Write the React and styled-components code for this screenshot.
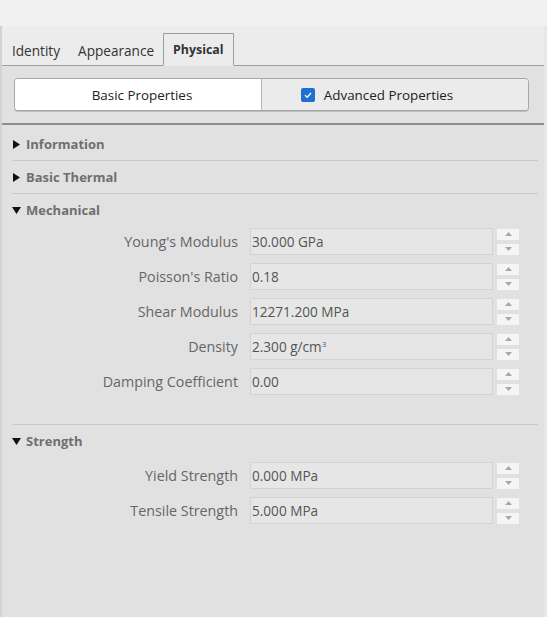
import React from 'react';
import styled, { createGlobalStyle } from 'styled-components';

const GlobalStyle = createGlobalStyle`
  html, body {
    margin: 0;
    padding: 0;
    background: #f0f0f0;
    font-family: "Open Sans", "Noto Sans", sans-serif;
  }
`;

const sections = [
  {
    title: 'Mechanical',
    top: 2,
    rows: [
      { label: "Young's Modulus", value: '30.000 GPa' },
      { label: "Poisson's Ratio", value: '0.18' },
      { label: 'Shear Modulus', value: '12271.200 MPa' },
      { label: 'Density', value: '2.300 g/cm', sup: '3' },
      { label: 'Damping Coefficient', value: '0.00' },
    ],
  },
  {
    title: 'Strength',
    top: 5,
    rows: [
      { label: 'Yield Strength', value: '0.000 MPa' },
      { label: 'Tensile Strength', value: '5.000 MPa' },
    ],
  },
];

const App = () => {
  return (
    <>
      <GlobalStyle />
      <TopStrip />
      <Panel>
        <TabBar>
          <Tab>Identity</Tab>
          <Tab>Appearance</Tab>
          <Tab active>Physical</Tab>
        </TabBar>
        <Segmented>
          <Segment active>Basic Properties</Segment>
          <Segment>
            <CheckBox>
              <svg width="10" height="10" viewBox="0 0 10 10">
                <path d="M2 5.2 L4.2 7.3 L8 3" fill="none" stroke="#fff" strokeWidth="1.3" />
              </svg>
            </CheckBox>
            Advanced Properties
          </Segment>
        </Segmented>
        <Body>
          <Header>
            <Arrow open={false} />
            Information
          </Header>
          <Divider />
          <Header>
            <Arrow open={false} />
            Basic Thermal
          </Header>
          <Divider />
          {sections.map((s, i) => (
            <Section key={s.title} last={i === sections.length - 1}>
              <Header>
                <Arrow open />
                {s.title}
              </Header>
              <Rows top={s.top}>
                {s.rows.map((r) => (
                  <Row key={r.label}>
                    <Label>{r.label}</Label>
                    <Input>
                      {r.value}
                      {r.sup && <sup>{r.sup}</sup>}
                    </Input>
                    <Spinner>
                      <SpinButton>
                        <svg width="7" height="4" viewBox="0 0 7 4"><path d="M0 4 L3.5 0 L7 4 Z" fill="#a8a8a8" /></svg>
                      </SpinButton>
                      <SpinButton>
                        <svg width="7" height="4" viewBox="0 0 7 4"><path d="M0 0 L3.5 4 L7 0 Z" fill="#a8a8a8" /></svg>
                      </SpinButton>
                    </Spinner>
                  </Row>
                ))}
              </Rows>
            </Section>
          ))}
        </Body>
      </Panel>
    </>
  );
};

const Arrow = ({ open }) => (
  <ArrowBox>
    <svg width="9" height="9" viewBox="0 0 9 9">
      {open ? <path d="M0 1 L9 1 L4.5 8 Z" fill="#111" /> : <path d="M1 0 L8 4.5 L1 9 Z" fill="#111" />}
    </svg>
  </ArrowBox>
);

const TopStrip = styled.div`
  height: 26px;
  background: #f1f1f1;
`;

const Panel = styled.div`
  height: 591px;
  background: #e1e1e1;
  border-left: 2px solid #d2d2d2;
  border-right: 3px solid #e8e8e8;
  box-sizing: border-box;
  display: flex;
  flex-direction: column;
`;

const TabBar = styled.div`
  display: flex;
  align-items: flex-end;
  height: 39px;
  padding-left: 1px;
  border-bottom: 1px solid #9e9e9e;
  background: #ececec;
`;

const Tab = styled.div`
  font-size: ${(p) => (p.active ? '12.4px' : '13.6px')};
  color: #333;
  padding: 0 9px;
  height: 30px;
  line-height: 29px;
  box-sizing: border-box;
  font-weight: ${(p) => (p.active ? 700 : 400)};
  margin-bottom: -1px;
  ${(p) =>
    p.active &&
    `
    border: 1px solid #9e9e9e;
    border-bottom: 1px solid #ececec;
    background: #ececec;
    height: 33px;
    line-height: 31px;
  `}
`;

const Segmented = styled.div`
  display: flex;
  margin: 12px 15px 12px 12px;
  height: 31px;
  border: 1px solid #a6a6a6;
  border-radius: 4px;
  overflow: hidden;
  background: #ebebeb;
  box-shadow: 0 1px 0 #bdbdbd;
`;

const Segment = styled.div`
  flex: ${(p) => (p.active ? '0 0 247px' : '1')};
  display: flex;
  align-items: center;
  justify-content: center;
  gap: 9px;
  box-sizing: border-box;
  padding: ${(p) => (p.active ? '0 0 0 8px' : '0 36px 0 0')};
  font-size: 13.4px;
  color: #222;
  background: ${(p) => (p.active ? '#ffffff' : '#ebebeb')};
  border-right: ${(p) => (p.active ? '1px solid #b8b8b8' : 'none')};
`;

const CheckBox = styled.span`
  width: 14px;
  height: 14px;
  border-radius: 2px;
  background: #1f6fd0;
  display: flex;
  align-items: center;
  justify-content: center;
`;

const Body = styled.div`
  flex: 1;
  border-top: 2px solid #8d8d8d;
  padding: 3px 6px 0 10px;
  background: #e1e1e1;
`;

const Header = styled.div`
  display: flex;
  align-items: center;
  height: 32px;
  font-size: 13px;
  font-weight: 700;
  color: #6f6f6f;
`;

const ArrowBox = styled.span`
  width: 14px;
  display: inline-flex;
  align-items: center;
`;

const Divider = styled.div`
  height: 1px;
  background: #c9c9c9;
`;

const Section = styled.div`
  border-bottom: ${(p) => (p.last ? 'none' : '1px solid #c9c9c9')};
  padding-bottom: ${(p) => (p.last ? '0' : '29px')};
`;

const Rows = styled.div`
  display: flex;
  flex-direction: column;
  gap: 8px;
  padding-top: ${(p) => p.top}px;
`;

const Row = styled.div`
  display: grid;
  grid-template-columns: 226px 243px 23px;
  column-gap: 12px;
  align-items: center;
  height: 27px;
`;

const Label = styled.div`
  text-align: right;
  font-size: 14.3px;
  color: #666;
`;

const Input = styled.div`
  height: 27px;
  box-sizing: border-box;
  border: 1px solid #d3d3d3;
  background: #e6e6e6;
  font-size: 13.6px;
  color: #555;
  line-height: 25px;
  padding-left: 1px;
  sup {
    font-size: 8px;
    line-height: 0;
    vertical-align: 5px;
  }
`;

const Spinner = styled.div`
  display: flex;
  flex-direction: column;
  gap: 4px;
  margin-left: -8px;
`;

const SpinButton = styled.div`
  height: 11px;
  width: 22px;
  background: #f5f5f5;
  display: flex;
  align-items: center;
  justify-content: center;
`;

export default App;
